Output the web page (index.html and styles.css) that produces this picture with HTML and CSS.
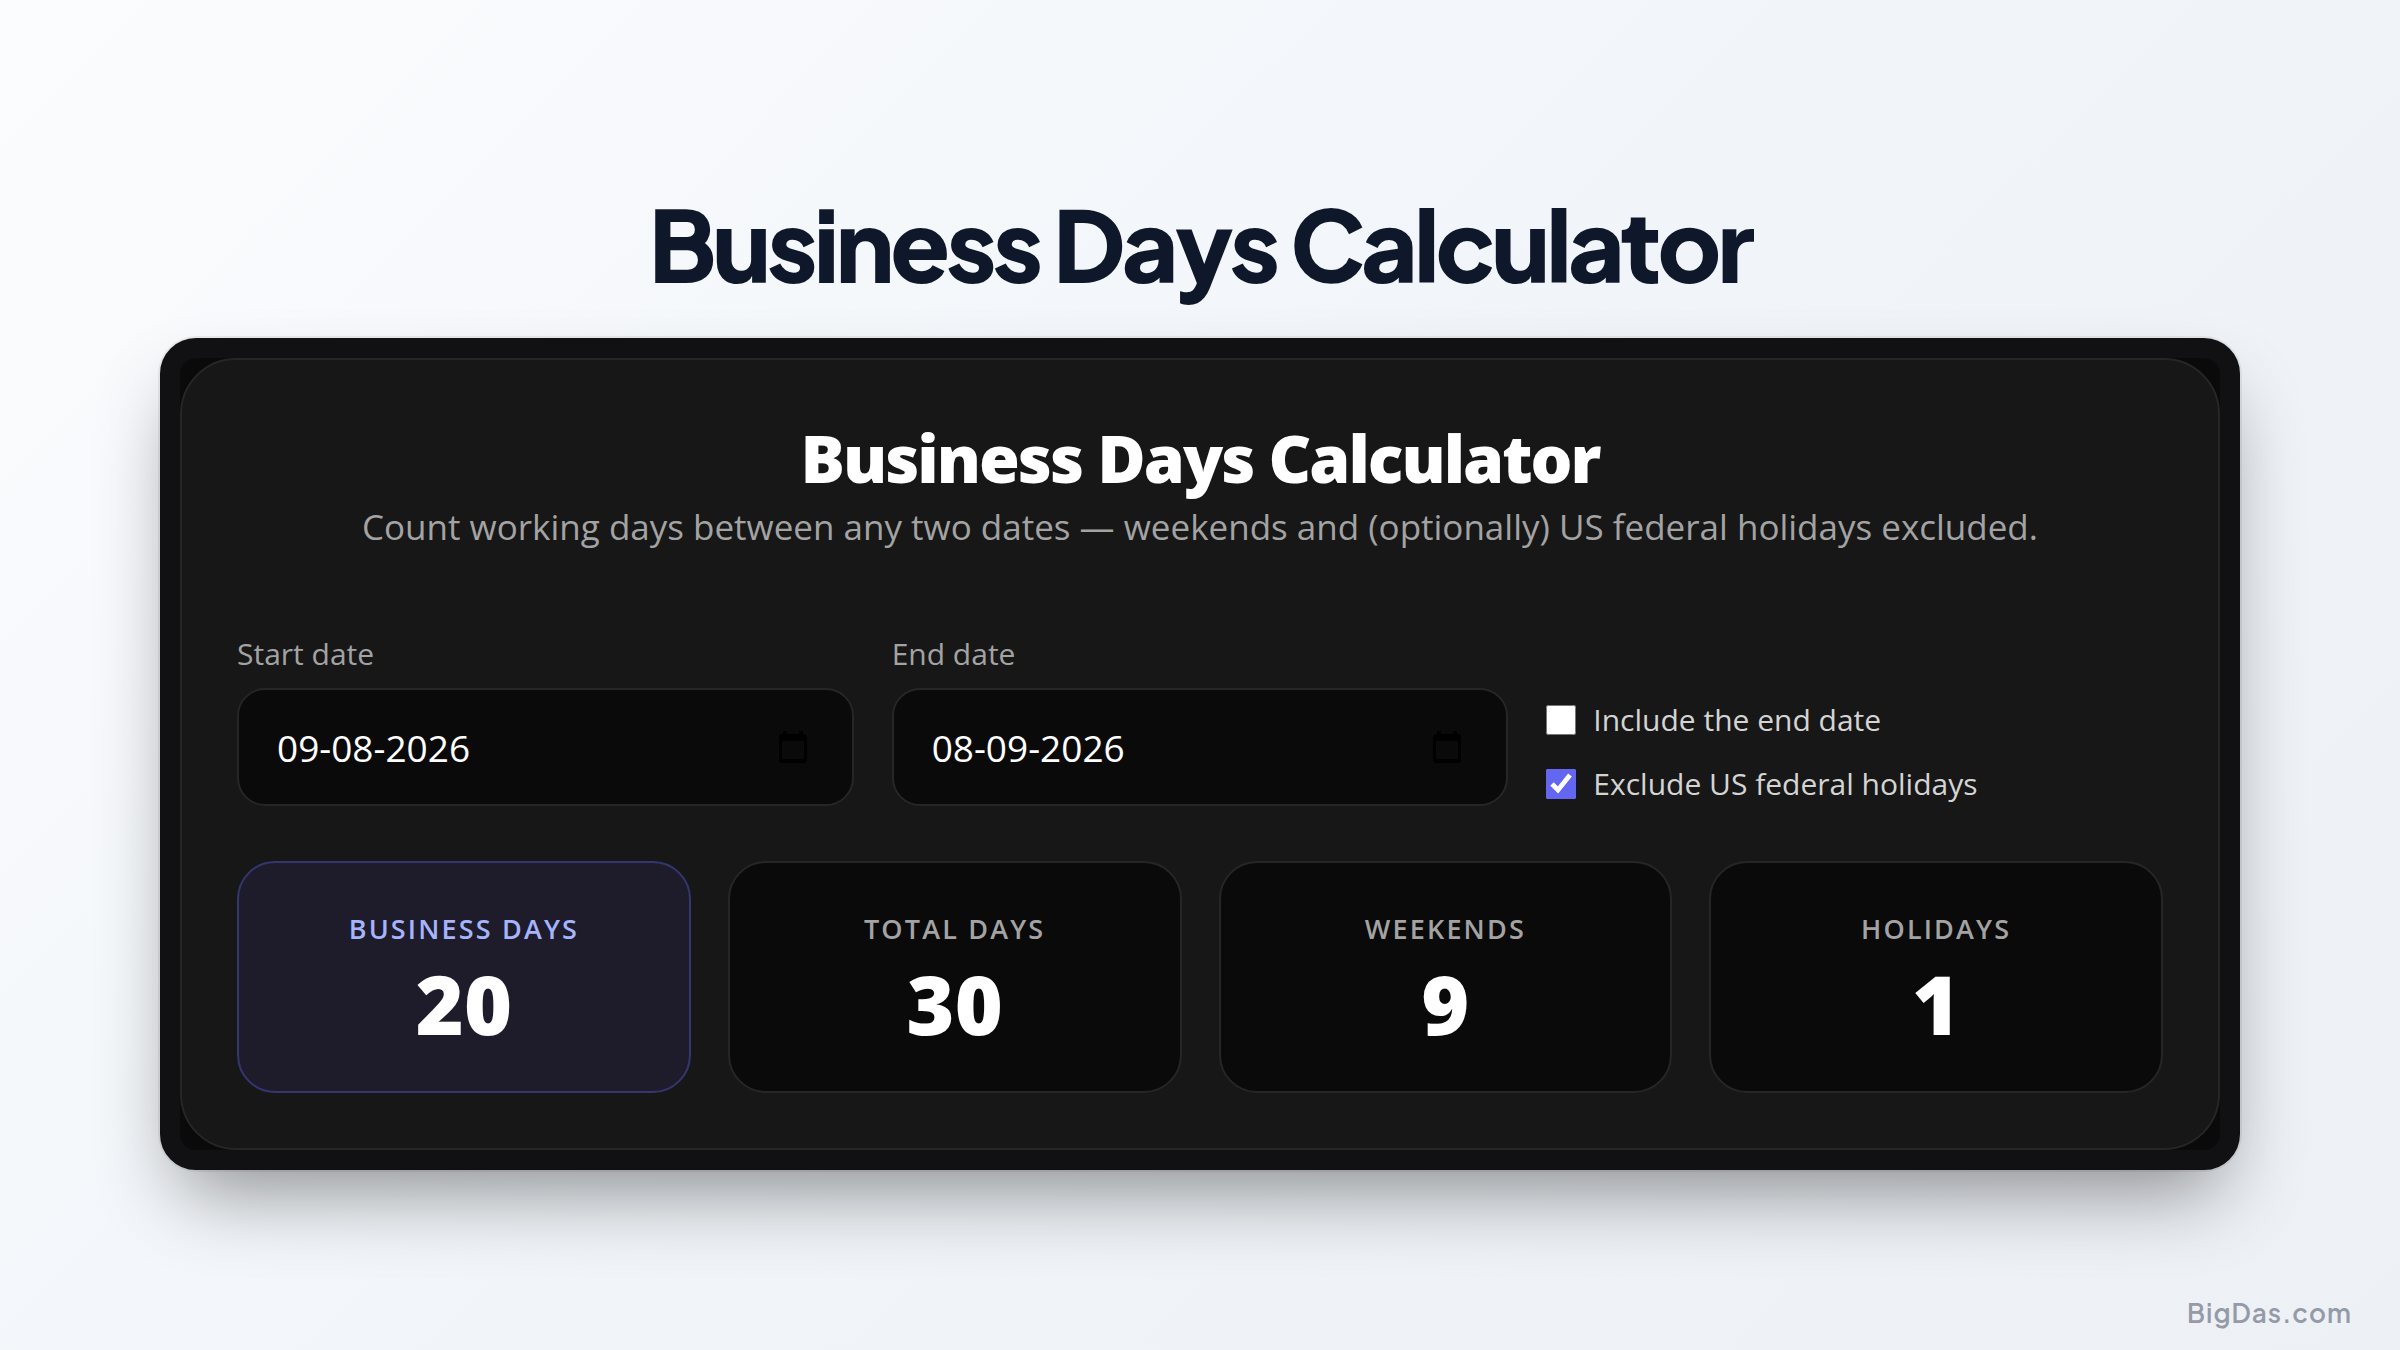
FILE: index.html
```html
<!DOCTYPE html>
<html lang="en">
<head>
  <meta charset="UTF-8">
  <meta name="viewport" content="width=device-width, initial-scale=1.0">
  <title>Business Days Calculator</title>
  <link rel="stylesheet" href="styles.css">
</head>
<body>

  <main class="page">
    <h1 class="page-title">Business Days Calculator</h1>

    <div class="frame">
      <section class="card">
        <header class="card-header">
          <h2>Business Days Calculator</h2>
          <p>Count working days between any two dates — weekends and (optionally) US federal holidays excluded.</p>
        </header>

        <form class="controls">
          <div class="field">
            <label for="start-date">Start date</label>
            <div class="date-box">
              <input type="text" id="start-date" value="09-08-2026">
              <button type="button" class="picker" aria-label="Pick start date">
                <svg viewBox="0 0 30 34"><path fill-rule="evenodd" d="M5 1h4v3h12V1h4v3h1a3 3 0 0 1 3 3v23a3 3 0 0 1-3 3H4a3 3 0 0 1-3-3V7a3 3 0 0 1 3-3h1zM4 11v18h22V11z"/></svg>
              </button>
            </div>
          </div>

          <div class="field">
            <label for="end-date">End date</label>
            <div class="date-box">
              <input type="text" id="end-date" value="08-09-2026">
              <button type="button" class="picker" aria-label="Pick end date">
                <svg viewBox="0 0 30 34"><path fill-rule="evenodd" d="M5 1h4v3h12V1h4v3h1a3 3 0 0 1 3 3v23a3 3 0 0 1-3 3H4a3 3 0 0 1-3-3V7a3 3 0 0 1 3-3h1zM4 11v18h22V11z"/></svg>
              </button>
            </div>
          </div>

          <div class="options">
            <label><input type="checkbox"> Include the end date</label>
            <label><input type="checkbox" checked> Exclude US federal holidays</label>
          </div>
        </form>

        <div class="stats">
          <div class="stat stat-main">
            <span class="stat-label">Business days</span>
            <span class="stat-value">20</span>
          </div>
          <div class="stat">
            <span class="stat-label">Total days</span>
            <span class="stat-value">30</span>
          </div>
          <div class="stat">
            <span class="stat-label">Weekends</span>
            <span class="stat-value">9</span>
          </div>
          <div class="stat">
            <span class="stat-label">Holidays</span>
            <span class="stat-value">1</span>
          </div>
        </div>
      </section>
    </div>
  </main>

  <footer class="site-name">BigDas.com</footer>

</body>
</html>
```
FILE: styles.css
```css
* {
  box-sizing: border-box;
}
body {
  margin: 0;
  min-height: 100vh;
  display: flex;
  flex-direction: column;
  font-family: "Segoe UI", "Open Sans", sans-serif;
  background: linear-gradient(135deg, #fbfcfe 0%, #f1f5f9 50%, #edf0f5 100%);
  color: #fff;
}
h1, h2, p {
  margin: 0;
}
.page {
  flex: 1;
  padding: 188px 160px 0;
}
.page-title {
  margin-bottom: 40px;
  font-family: "Plus Jakarta Sans", Inter, sans-serif;
  font-size: 98px;
  font-weight: 800;
  line-height: 110px;
  letter-spacing: -0.04em;
  text-align: center;
  color: #0f172a;
}

/* calculator */
.frame {
  border: 20px solid #111113;
  border-radius: 36px;
  background: #0a0a0a;
  box-shadow: 0 0 0 2px rgba(0,0,0,0.06), 0 40px 80px -20px rgba(0,0,0,0.43);
}
.card {
  padding: 55px;
  border: 2px solid #262626;
  border-radius: 56px;
  background: #171717;
}
.card-header {
  margin-bottom: 78px;
  text-align: center;
}
.card-header h2 {
  font-size: 66px;
  font-weight: 800;
  line-height: 84px;
  letter-spacing: -0.03em;
}
.card-header p {
  font-size: 35px;
  line-height: 55px;
  color: #a3a3a3;
}
.controls {
  display: grid;
  grid-template-columns: repeat(3, 1fr);
  gap: 38px;
  align-items: end;
  margin-bottom: 55px;
}
.field label {
  display: block;
  margin-bottom: 12px;
  font-size: 30px;
  line-height: 44px;
  color: #a3a3a3;
}
.date-box {
  display: flex;
  align-items: center;
  height: 118px;
  padding: 0 44px 0 38px;
  border: 2px solid #262626;
  border-radius: 28px;
  background: #0a0a0a;
}
.date-box input {
  flex: 1;
  min-width: 0;
  padding: 0;
  border: 0;
  outline: 0;
  background: none;
  font: inherit;
  font-size: 37px;
  color: #fff;
}
.picker {
  padding: 0;
  border: 0;
  background: none;
}
.picker svg {
  display: block;
  width: 30px;
  height: 34px;
  fill: #000;
}
.options {
  display: flex;
  flex-direction: column;
  gap: 20px;
}
.options label {
  display: flex;
  align-items: center;
  gap: 17px;
  font-size: 30px;
  line-height: 44px;
  color: #d4d4d4;
}
.options input {
  width: 30px;
  height: 30px;
  margin: 0;
  accent-color: #6366f1;
}

/* results */
.stats {
  display: grid;
  grid-template-columns: repeat(4, 1fr);
  gap: 37px;
}
.stat {
  display: flex;
  flex-direction: column;
  align-items: center;
  gap: 6px;
  padding: 46px 36px 40px;
  border: 2px solid #262626;
  border-radius: 38px;
  background: #0a0a0a;
}
.stat-main {
  border-color: #34366f;
  background: #1e1c2b;
}
.stat-label {
  font-size: 27px;
  font-weight: 600;
  line-height: 40px;
  letter-spacing: 0.08em;
  text-transform: uppercase;
  color: #a3a3a3;
}
.stat-main .stat-label {
  color: #a5b4fc;
}
.stat-value {
  font-size: 82px;
  font-weight: 800;
  line-height: 96px;
}

.site-name {
  padding: 0 48px 18px;
  font-family: "Plus Jakarta Sans", Inter, sans-serif;
  font-size: 26px;
  font-weight: 600;
  line-height: 38px;
  letter-spacing: 0.04em;
  text-align: right;
  color: #949ba7;
}
```
